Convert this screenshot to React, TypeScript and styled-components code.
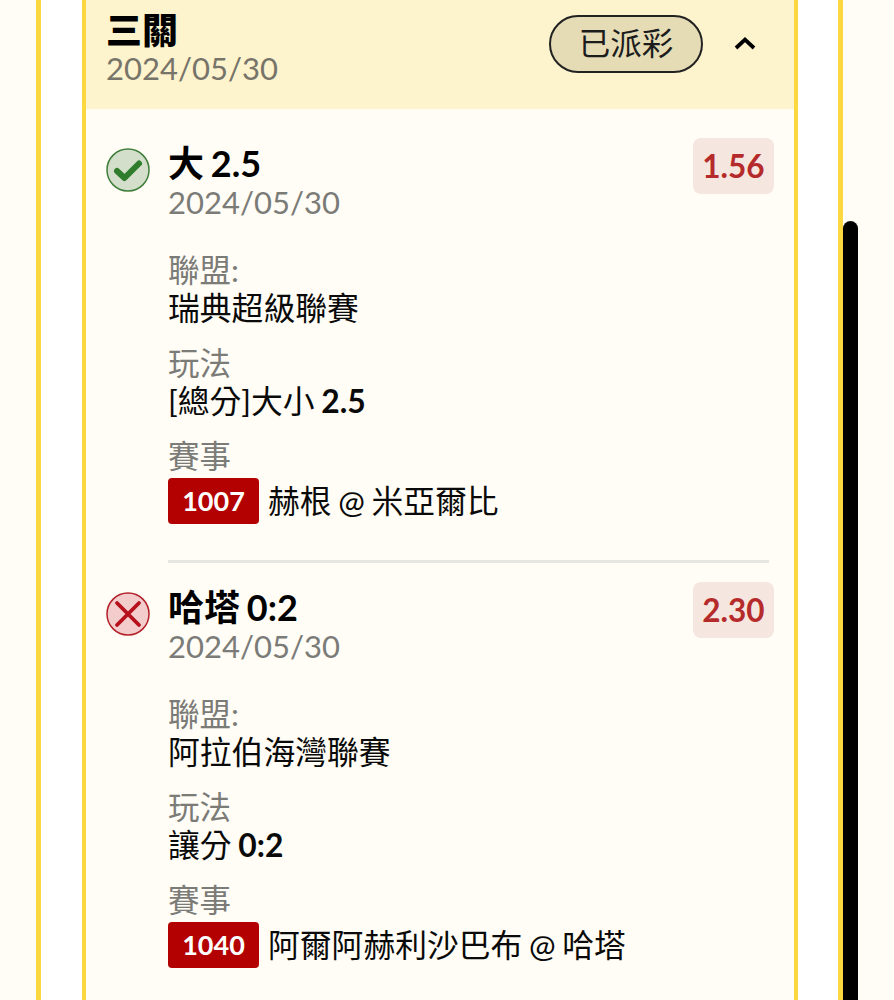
import React from 'react';
import styled, { createGlobalStyle } from 'styled-components';

const GlobalStyle = createGlobalStyle`
    html, body {
        margin: 0;
        padding: 0;
        height: 1000px;
        overflow: hidden;
        background: #fffdf5;
        font-family: Lato, 'Noto Sans CJK TC', sans-serif;
    }
`;

interface Bet {
    won: boolean;
    title: string;
    titleValue: string;
    odds: string;
    league: string;
    playName: string;
    playValue: string;
    code: string;
    match: string;
}

const bets: Bet[] = [
    {
        won: true,
        title: '大',
        titleValue: '2.5',
        odds: '1.56',
        league: '瑞典超級聯賽',
        playName: '[總分]大小',
        playValue: '2.5',
        code: '1007',
        match: '赫根 @ 米亞爾比',
    },
    {
        won: false,
        title: '哈塔',
        titleValue: '0:2',
        odds: '2.30',
        league: '阿拉伯海灣聯賽',
        playName: '讓分',
        playValue: '0:2',
        code: '1040',
        match: '阿爾阿赫利沙巴布 @ 哈塔',
    },
];

const ResultIcon: React.FC<{ won: boolean }> = ({ won }) => (
    <IconWrap viewBox="0 0 44 44">
        <circle
            cx="22"
            cy="22"
            r="21"
            fill={won ? '#d3dfcb' : '#f2cdcb'}
            stroke={won ? '#3f7d3a' : '#b3202a'}
            strokeWidth="1.5"
        />
        {won ? (
            <path
                d="M11 23 L18.5 30 L33 15.5"
                fill="none"
                stroke="#2f7d2c"
                strokeWidth="6"
                strokeLinecap="round"
                strokeLinejoin="round"
            />
        ) : (
            <path
                d="M11 11 L33 33 M33 11 L11 33"
                fill="none"
                stroke="#b5101c"
                strokeWidth="3.8"
                strokeLinecap="round"
            />
        )}
    </IconWrap>
);

const App: React.FC = () => (
    <>
        <GlobalStyle />
        <Page>
            <OuterPanel>
                <Card>
                    <Header>
                        <div>
                            <HeaderTitle>三關</HeaderTitle>
                            <HeaderDate>2024/05/30</HeaderDate>
                        </div>
                        <HeaderActions>
                            <StatusPill>已派彩</StatusPill>
                            <svg width="26" height="18" viewBox="0 0 26 18">
                                <path
                                    d="M4 13 L13 4.5 L22 13"
                                    fill="none"
                                    stroke="#000"
                                    strokeWidth="3.8"
                                    strokeLinejoin="miter"
                                />
                            </svg>
                        </HeaderActions>
                    </Header>
                    <Body>
                        {bets.map(bet => (
                            <BetRow key={bet.code}>
                                <ResultIcon won={bet.won} />
                                <BetContent>
                                    <BetHead>
                                        <div>
                                            <BetTitle>
                                                {bet.title} <span>{bet.titleValue}</span>
                                            </BetTitle>
                                            <BetDate>2024/05/30</BetDate>
                                        </div>
                                        <Odds>{bet.odds}</Odds>
                                    </BetHead>
                                    <Field>
                                        <FieldLabel>聯盟:</FieldLabel>
                                        <FieldValue>{bet.league}</FieldValue>
                                    </Field>
                                    <Field>
                                        <FieldLabel>玩法</FieldLabel>
                                        <FieldValue>
                                            {bet.playName} <strong>{bet.playValue}</strong>
                                        </FieldValue>
                                    </Field>
                                    <Field>
                                        <FieldLabel>賽事</FieldLabel>
                                        <MatchLine>
                                            <MatchCode>{bet.code}</MatchCode>
                                            <FieldValue>{bet.match}</FieldValue>
                                        </MatchLine>
                                    </Field>
                                </BetContent>
                            </BetRow>
                        ))}
                    </Body>
                </Card>
            </OuterPanel>
            <ScrollThumb />
        </Page>
    </>
);

export default App;

const Page = styled.div`
    position: relative;
    width: 894px;
    height: 1000px;
    overflow: hidden;
    padding-left: 36px;
    box-sizing: border-box;
`;

const OuterPanel = styled.div`
    width: 807px;
    height: 1000px;
    box-sizing: border-box;
    background: #fff;
    border-left: 5px solid #fbd83f;
    border-right: 5px solid #fbd83f;
    padding: 0 40px 0 41px;
`;

const Card = styled.div`
    height: 1000px;
    background: #fffdf5;
    border-left: 4px solid #fbd83f;
    border-right: 4px solid #fbd83f;
`;

const Header = styled.div`
    height: 109px;
    box-sizing: border-box;
    background: #fdf3cc;
    display: flex;
    justify-content: space-between;
    align-items: flex-start;
    padding: 8px 36px 0 20px;
`;

const HeaderTitle = styled.div`
    font-size: 36px;
    line-height: 44px;
    font-weight: 900;
    color: #000;
`;

const HeaderDate = styled.div`
    font-size: 31px;
    line-height: 32px;
    color: #77746a;
`;

const HeaderActions = styled.div`
    display: flex;
    align-items: center;
    gap: 29px;
    margin-top: 7px;
`;

const StatusPill = styled.div`
    width: 154px;
    height: 58px;
    box-sizing: border-box;
    border: 2px solid #222;
    border-radius: 29px;
    background: #e5dcb6;
    color: #1c1c1c;
    font-size: 31.5px;
    line-height: 52px;
    text-align: center;
`;

const Body = styled.div`
    padding: 29px 20px 0 20px;
`;

const BetRow = styled.div`
    display: flex;
    gap: 18px;
`;

const IconWrap = styled.svg`
    flex: none;
    width: 44px;
    height: 44px;
    margin-top: 10px;
`;

const BetContent = styled.div`
    flex: 1;
    min-width: 0;
    padding-bottom: 36px;
    margin-bottom: 19px;
    margin-right: 5px;
    border-bottom: 3px solid #e8e6e0;
`;

const BetHead = styled.div`
    display: flex;
    justify-content: space-between;
    align-items: flex-start;
    margin-bottom: 32px;
`;

const BetTitle = styled.div`
    font-size: 36px;
    line-height: 44px;
    font-weight: 700;
    color: #000;
    margin-top: 3px;
    word-spacing: -2px;
`;

const BetDate = styled.div`
    font-size: 31px;
    line-height: 34px;
    color: #7b7b78;
`;

const Odds = styled.div`
    width: 81px;
    height: 56px;
    margin-right: -5px;
    border-radius: 8px;
    background: #f6e6e0;
    color: #b52a2a;
    font-size: 31.5px;
    font-weight: 700;
    line-height: 56px;
    text-align: center;
`;

const Field = styled.div`
    margin-bottom: 17px;

    &:last-child {
        margin-bottom: 0;
    }
`;

const FieldLabel = styled.div`
    font-size: 31.5px;
    line-height: 38px;
    color: #7b7b78;
`;

const FieldValue = styled.div`
    font-size: 31.8px;
    line-height: 38px;
    color: #0a0a0a;
    word-spacing: -1.5px;

    strong {
        font-weight: 700;
    }
`;

const MatchLine = styled.div`
    display: flex;
    align-items: center;
    gap: 9px;
    margin-top: 3px;
`;

const MatchCode = styled.div`
    width: 91px;
    height: 46px;
    border-radius: 4px;
    background: #b30000;
    color: #fff;
    font-size: 27px;
    font-weight: 700;
    line-height: 46px;
    text-align: center;
`;

const ScrollThumb = styled.div`
    position: absolute;
    left: 843px;
    top: 221px;
    width: 15px;
    height: 800px;
    border-radius: 8px;
    background: #000;
`;
